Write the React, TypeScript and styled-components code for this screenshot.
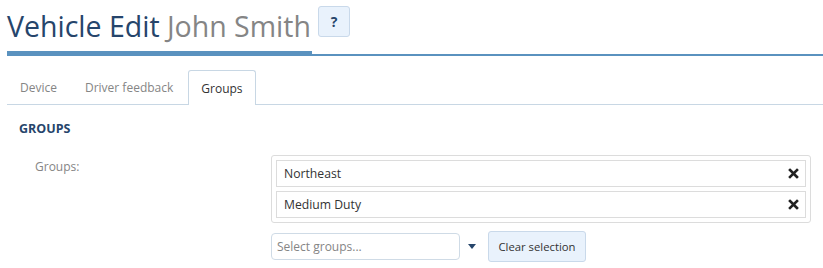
import React from "react";
import styled, { createGlobalStyle } from "styled-components";

const GlobalStyle = createGlobalStyle`
  body {
    margin: 0;
    background: #fff;
    font-family: "Open Sans", "Noto Sans", Arial, sans-serif;
    font-size: 12px;
    color: #333;
  }
`;

const Page = styled.div`
  padding: 0 0 0 7px;
`;

const Header = styled.div`
  display: flex;
  align-items: flex-end;
  border-bottom: 2px solid #5a92bf;
`;

const Title = styled.h1`
  margin: 0 0 -2px 0;
  display: flex;
  align-items: center;
  gap: 7px;
  height: 51px;
  font-size: 28.5px;
  font-weight: 400;
  color: #26456b;
  border-bottom: 5px solid #5a92bf;
`;

const Muted = styled.span`
  color: #858585;
`;

const HelpButton = styled.button`
  width: 32px;
  height: 31px;
  margin-bottom: 8px;
  margin-right: -38px;
  border: 1px solid #c9d9ea;
  border-radius: 3px;
  background: #e9f2fc;
  color: #26456b;
  font-family: inherit;
  font-weight: 700;
  font-size: 14px;
  padding: 0;
`;

const Tabs = styled.div`
  display: flex;
  margin-top: 14px;
  border-bottom: 1px solid #c8d7e4;
  height: 34px;
`;

const Tab = styled.div<{ $active?: boolean }>`
  display: flex;
  align-items: center;
  padding: 0 12px;
  font-size: 12px;
  color: ${(p) => (p.$active ? "#333" : "#858585")};
  background: #fff;
  border: 1px solid ${(p) => (p.$active ? "#c8d7e4" : "transparent")};
  border-bottom: none;
  border-radius: 3px 3px 0 0;
  margin-bottom: ${(p) => (p.$active ? "-1px" : "0")};
  margin-right: 2px;
`;

const Section = styled.h2`
  margin: 15px 0 0 12px;
  font-size: 12.5px;
  font-weight: 700;
  color: #26456b;
`;

const FormRow = styled.div`
  display: grid;
  grid-template-columns: 264px 540px;
  margin-top: 18px;
`;

const Label = styled.div`
  padding: 3px 0 0 28px;
  color: #858585;
  font-size: 12px;
`;

const Field = styled.div`
  display: flex;
  flex-direction: column;
  gap: 8px;
`;

const SelectedList = styled.div`
  display: flex;
  flex-direction: column;
  gap: 4px;
  padding: 4px;
  border: 1px solid #dcdcdc;
  border-radius: 3px;
`;

const Item = styled.div`
  display: flex;
  align-items: center;
  justify-content: space-between;
  height: 25px;
  padding: 0 6px 0 7px;
  border: 1px solid #dcdcdc;
  font-size: 12.2px;
  color: #333;
`;

const Controls = styled.div`
  display: flex;
  align-items: center;
`;

const Input = styled.div`
  width: 177px;
  height: 25px;
  display: flex;
  align-items: center;
  padding: 0 5px;
  border: 1px solid #cfdbe6;
  border-radius: 4px;
  color: #858585;
  font-size: 12px;
`;

const Caret = styled.div`
  margin: 0 12px 0 8px;
  width: 0;
  height: 0;
  border-left: 4px solid transparent;
  border-right: 4px solid transparent;
  border-top: 5px solid #26456b;
`;

const Button = styled.button`
  height: 31px;
  width: 98px;
  padding: 0;
  border: 1px solid #c9d9ea;
  border-radius: 3px;
  background: #e9f2fc;
  color: #333;
  font-family: inherit;
  font-size: 11.3px;
`;

const CloseIcon = () => (
  <svg width="11" height="11" viewBox="0 0 11 11">
    <path d="M2 2 L9 9 M9 2 L2 9" stroke="#222" strokeWidth="2.6" strokeLinecap="square" />
  </svg>
);

const groups = ["Northeast", "Medium Duty"];

export default function App() {
  return (
    <>
      <GlobalStyle />
      <Page>
        <Header>
          <Title>
            <span>
              Vehicle Edit <Muted>John Smith</Muted>
            </span>
            <HelpButton>?</HelpButton>
          </Title>
        </Header>
        <Tabs>
          <Tab>Device</Tab>
          <Tab>Driver feedback</Tab>
          <Tab $active>Groups</Tab>
        </Tabs>
        <Section>GROUPS</Section>
        <FormRow>
          <Label>Groups:</Label>
          <Field>
            <SelectedList>
              {groups.map((g) => (
                <Item key={g}>
                  {g}
                  <CloseIcon />
                </Item>
              ))}
            </SelectedList>
            <Controls>
              <Input>Select groups...</Input>
              <Caret />
              <Button>Clear selection</Button>
            </Controls>
          </Field>
        </FormRow>
      </Page>
    </>
  );
}
